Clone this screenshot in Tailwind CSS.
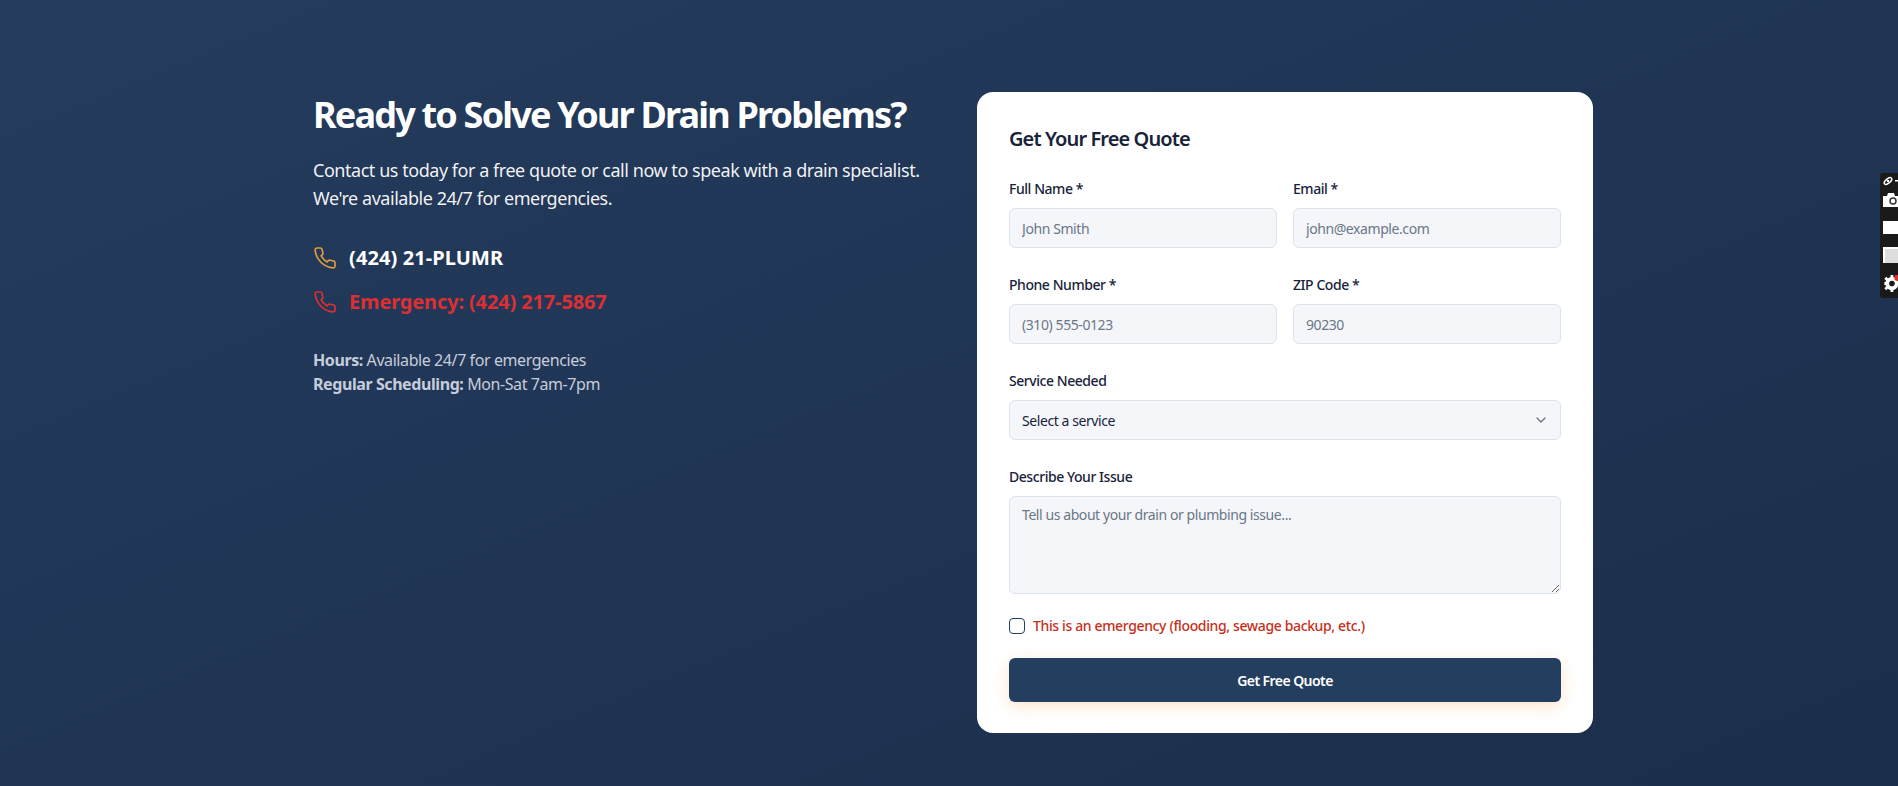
<!DOCTYPE html>
<html lang="en">
<head>
<meta charset="utf-8">
<title>Get Your Free Quote</title>
<script src="https://cdn.jsdelivr.net/npm/@tailwindcss/browser@4"></script>
</head>
<body class="m-0 overflow-hidden font-['Noto_Sans',sans-serif]">
<section class="relative h-[786px] w-full overflow-hidden bg-gradient-to-br from-[#253c5e] to-[#1b2e4b] pl-[313px] pt-[92px]">
  <div class="grid w-[1280px] grid-cols-2 gap-12">
    <div class="text-white">
      <h2 class="text-[36px] leading-[46px] font-bold tracking-[-0.05em] whitespace-nowrap">Ready to Solve Your Drain Problems?</h2>
      <p class="mt-[18px] text-[18px] leading-[28px] tracking-[-0.0255em] text-white/95 whitespace-nowrap">Contact us today for a free quote or call now to speak with a drain specialist.<br>We're available 24/7 for emergencies.</p>
      <div class="mt-[32px] flex flex-col gap-[16px]">
        <div class="flex h-[28px] items-center gap-3">
          <svg class="h-6 w-6 text-[#e09a3e]" fill="none" viewBox="0 0 24 24" stroke="currentColor" stroke-width="1.7" stroke-linecap="round" stroke-linejoin="round"><path d="M22 16.92v3a2 2 0 0 1-2.18 2 19.79 19.79 0 0 1-8.63-3.07 19.5 19.5 0 0 1-6-6 19.79 19.79 0 0 1-3.07-8.67A2 2 0 0 1 4.11 2h3a2 2 0 0 1 2 1.72 12.84 12.84 0 0 0 .7 2.81 2 2 0 0 1-.45 2.11L8.09 9.91a16 16 0 0 0 6 6l1.27-1.27a2 2 0 0 1 2.11-.45 12.84 12.84 0 0 0 2.81.7A2 2 0 0 1 22 16.92z"/></svg>
          <span class="text-[20px] leading-[28px] font-bold tracking-[0.005em]">(424) 21-PLUMR</span>
        </div>
        <div class="flex h-[28px] items-center gap-3">
          <svg class="h-6 w-6 text-[#dc2f33]" fill="none" viewBox="0 0 24 24" stroke="currentColor" stroke-width="1.7" stroke-linecap="round" stroke-linejoin="round"><path d="M22 16.92v3a2 2 0 0 1-2.18 2 19.79 19.79 0 0 1-8.63-3.07 19.5 19.5 0 0 1-6-6 19.79 19.79 0 0 1-3.07-8.67A2 2 0 0 1 4.11 2h3a2 2 0 0 1 2 1.72 12.84 12.84 0 0 0 .7 2.81 2 2 0 0 1-.45 2.11L8.09 9.91a16 16 0 0 0 6 6l1.27-1.27a2 2 0 0 1 2.11-.45 12.84 12.84 0 0 0 2.81.7A2 2 0 0 1 22 16.92z"/></svg>
          <span class="text-[20px] leading-[28px] font-bold tracking-[-0.007em] text-[#dc2f33]">Emergency: (424) 217-5867</span>
        </div>
      </div>
      <div class="mt-[32px] text-[16px] leading-[24px] tracking-[-0.026em] text-[#c5cddb]">
        <p><strong class="font-bold">Hours:</strong> Available 24/7 for emergencies</p>
        <p><strong class="font-bold">Regular Scheduling:</strong> Mon-Sat 7am-7pm</p>
      </div>
    </div>

    <form class="h-[641px] rounded-2xl bg-white p-8 text-[#18233a]">
      <h3 class="text-[20px] leading-[30px] font-semibold tracking-[-0.045em]">Get Your Free Quote</h3>
      <div class="mt-[26px] grid grid-cols-2 gap-x-4 gap-y-7">
        <div>
          <label class="mb-[10px] block text-[14px] leading-[18px] font-medium tracking-[-0.032em]">Full Name *</label>
          <input class="h-10 w-full rounded-md border border-[#dde3ec] bg-[#f4f6fa] px-3 text-[14px] tracking-[-0.03em] outline-none placeholder:text-[#6b7686]" placeholder="John Smith">
        </div>
        <div>
          <label class="mb-[10px] block text-[14px] leading-[18px] font-medium tracking-[-0.032em]">Email *</label>
          <input class="h-10 w-full rounded-md border border-[#dde3ec] bg-[#f4f6fa] px-3 text-[14px] tracking-[-0.03em] outline-none placeholder:text-[#6b7686]" placeholder="john@example.com">
        </div>
        <div>
          <label class="mb-[10px] block text-[14px] leading-[18px] font-medium tracking-[-0.032em]">Phone Number *</label>
          <input class="h-10 w-full rounded-md border border-[#dde3ec] bg-[#f4f6fa] px-3 text-[14px] tracking-[-0.03em] outline-none placeholder:text-[#6b7686]" placeholder="(310) 555-0123">
        </div>
        <div>
          <label class="mb-[10px] block text-[14px] leading-[18px] font-medium tracking-[-0.032em]">ZIP Code *</label>
          <input class="h-10 w-full rounded-md border border-[#dde3ec] bg-[#f4f6fa] px-3 text-[14px] tracking-[-0.03em] outline-none placeholder:text-[#6b7686]" placeholder="90230">
        </div>
        <div class="col-span-2">
          <label class="mb-[10px] block text-[14px] leading-[18px] font-medium tracking-[-0.032em]">Service Needed</label>
          <div class="relative">
            <select class="h-10 w-full appearance-none rounded-md border border-[#dde3ec] bg-[#f4f6fa] px-3 text-[14px] tracking-[-0.03em] outline-none"><option>Select a service</option></select>
            <svg class="absolute top-3 right-3 h-4 w-4 text-[#6b7686]" fill="none" viewBox="0 0 24 24" stroke="currentColor" stroke-width="2" stroke-linecap="round" stroke-linejoin="round"><path d="m6 9 6 6 6-6"/></svg>
          </div>
        </div>
        <div class="col-span-2">
          <label class="mb-[10px] block text-[14px] leading-[18px] font-medium tracking-[-0.032em]">Describe Your Issue</label>
          <textarea class="block h-[98px] w-full rounded-md border border-[#dde3ec] bg-[#f4f6fa] px-3 py-2 text-[14px] leading-[20px] tracking-[-0.03em] outline-none placeholder:text-[#6b7686]" placeholder="Tell us about your drain or plumbing issue..."></textarea>
        </div>
      </div>
      <label class="mt-[22px] flex h-5 items-center gap-2 text-[14px] leading-[20px] font-medium tracking-[-0.026em] text-[#c62f20]">
        <input type="checkbox" class="h-4 w-4 appearance-none rounded-[4px] border-[1.5px] border-[#243e5f] bg-white">
        This is an emergency (flooding, sewage backup, etc.)
      </label>
      <button type="button" class="mt-[22px] h-11 w-full rounded-md bg-[#243e5f] text-[14px] font-semibold tracking-[-0.04em] text-white shadow-[0_4px_16px_rgba(240,170,80,0.3)]">Get Free Quote</button>
    </form>
  </div>

  <aside class="absolute top-[173px] right-0 flex h-[125px] w-[18px] flex-col items-start overflow-hidden rounded-l-[3px] bg-[#1a1a1a] pt-[3px] pl-[3px]">
    <svg class="h-[10px] w-[15px] shrink-0" viewBox="0 0 15 10" fill="none" stroke="white" stroke-width="1.5"><ellipse cx="5" cy="5" rx="4.5" ry="2.2" transform="rotate(-40 5 5)"/><circle cx="5" cy="5" r="1.2" fill="white" stroke="none"/><rect x="12" y="4" width="3" height="1.5" fill="white" stroke="none"/></svg>
    <svg class="mt-[7px] h-[14px] w-[15px] shrink-0" viewBox="0 0 15 14"><path fill="white" d="M0 3h4l1-3h6l1 3h3v11H0z"/><circle cx="10" cy="8" r="3" fill="none" stroke="#333" stroke-width="1.5"/></svg>
    <span class="mt-[14px] h-[13px] w-[15px] shrink-0 bg-white"></span>
    <span class="mt-[13px] h-[16px] w-[15px] shrink-0 border-t-2 border-l-2 border-white bg-[#ddd]"></span>
    <svg class="mt-[12px] h-[17px] w-[15px] shrink-0" viewBox="0 0 15 18"><circle cx="9" cy="9" r="5" fill="none" stroke="white" stroke-width="4"/><path stroke="white" stroke-width="3" d="M9 0v4M9 14v4M1 9h4M2 3l3 3M2 15l3-3M13 6l2-3"/><circle cx="15" cy="3" r="3.5" fill="#d43a2a"/></svg>
  </aside>
</section>
</body>
</html>
